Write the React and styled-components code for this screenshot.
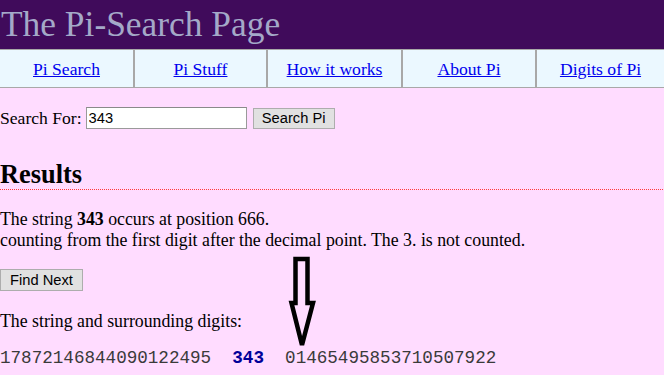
import React from "react";
import styled, { createGlobalStyle } from "styled-components";

const Global = createGlobalStyle`
  html, body { margin: 0; padding: 0; }
  body {
    background: #ffdcff;
    font-family: "Liberation Serif", "Times New Roman", serif;
    font-size: 17.8px;
    color: #000;
    width: 664px;
    height: 375px;
    overflow: hidden;
  }
`;

const Page = styled.div`
  position: relative;
  width: 664px;
  height: 375px;
`;

const Header = styled.header`
  background: #400b5b;
  height: 49px;
  display: flex;
  align-items: flex-start;
`;

const Title = styled.h1`
  margin: 0;
  padding-left: 1px;
  font-weight: normal;
  font-size: 35.4px;
  line-height: 49px;
  color: #a4a9c8;
  font-family: "Liberation Serif", "Times New Roman", serif;
`;

const Nav = styled.nav`
  display: grid;
  grid-template-columns: 133px 133px 135px 134px 1fr;
  height: 37px;
  background: #ebf8ff;
  border-top: 1px solid #a8a8a8;
  border-bottom: 1px solid #a8a8a8;
`;

const NavCell = styled.div`
  display: flex;
  align-items: center;
  justify-content: center;
  border-left: ${(p) => (p.$first ? "none" : "2px solid #a8a8a8")};
  padding-top: 2px;
  box-sizing: border-box;
`;

const NavLink = styled.a`
  color: #0000ee;
  text-decoration: underline;
  font-size: 17.6px;
`;

const SearchRow = styled.form`
  display: flex;
  align-items: center;
  margin: 19px 0 0 0;
  height: 22px;
`;

const Label = styled.span`
  font-size: 17.6px;
  margin-right: 4px;
`;

const TextInput = styled.input`
  box-sizing: border-box;
  width: 161px;
  height: 22px;
  border: 1px solid #9a9a9a;
  border-top-color: #8a8a8a;
  background: #fff;
  font-family: "Liberation Sans", Arial, sans-serif;
  font-size: 14.7px;
  padding: 0 2px;
  margin: 0 6px 0 0;
  color: #000;
`;

const Button = styled.button`
  box-sizing: border-box;
  height: ${(p) => p.$h || "21px"};
  width: ${(p) => p.$w};
  background: #e1e1e1;
  border: 1px solid #adadad;
  font-family: "Liberation Sans", Arial, sans-serif;
  font-size: 14.7px;
  color: #000;
  padding: 0;
  margin: 0;
`;

const Heading = styled.h2`
  margin: 30px 0 0 0;
  padding-bottom: 1px;
  font-size: 26.4px;
  line-height: 30px;
  font-weight: bold;
  background-image: linear-gradient(to right, #ff3a3a 50%, transparent 50%);
  background-position: left bottom;
  background-size: 2px 1px;
  background-repeat: repeat-x;
`;

const Para = styled.p`
  margin: ${(p) => p.$m || "0"};
  line-height: 21px;
`;

const ButtonRow = styled.div`
  margin-top: 18px;
  display: flex;
`;

const Digits = styled.div`
  margin-top: 16px;
  font-family: "Liberation Mono", "Courier New", monospace;
  font-size: 17.6px;
  line-height: 21px;
  color: #3a3a3a;
  white-space: pre;
`;

const Hit = styled.b`
  color: #000099;
`;

const ArrowSvg = styled.svg`
  position: absolute;
  left: 0;
  top: 0;
  pointer-events: none;
`;

const links = ["Pi Search", "Pi Stuff", "How it works", "About Pi", "Digits of Pi"];

export default function App() {
  return (
    <>
      <Global />
      <Page>
        <Header>
          <Title>The Pi-Search Page</Title>
        </Header>
        <Nav>
          {links.map((l, i) => (
            <NavCell key={l} $first={i === 0}>
              <NavLink href="#">{l}</NavLink>
            </NavCell>
          ))}
        </Nav>
        <SearchRow onSubmit={(e) => e.preventDefault()}>
          <Label>Search For:</Label>
          <TextInput defaultValue="343" />
          <Button type="button" $w="82px">Search Pi</Button>
        </SearchRow>
        <Heading>Results</Heading>
        <Para $m="19px 0 0 0">
          The string <b>343</b> occurs at position 666.
          <br />
          counting from the first digit after the decimal point. The 3. is not counted.
        </Para>
        <ButtonRow>
          <Button type="button" $w="83px" $h="22px">Find Next</Button>
        </ButtonRow>
        <Para $m="20px 0 0 0">The string and surrounding digits:</Para>
        <Digits>
          {"17872146844090122495  "}
          <Hit>343</Hit>
          {"  01465495853710507922"}
        </Digits>
        <ArrowSvg width="664" height="375" viewBox="0 0 664 375">
          <polygon
            points="295.5,259 307.5,259 307.5,303 313,303 302,345 291.5,303 295.5,303"
            fill="none"
            stroke="#000"
            strokeWidth="4.5"
            strokeLinejoin="miter"
          />
        </ArrowSvg>
      </Page>
    </>
  );
}
